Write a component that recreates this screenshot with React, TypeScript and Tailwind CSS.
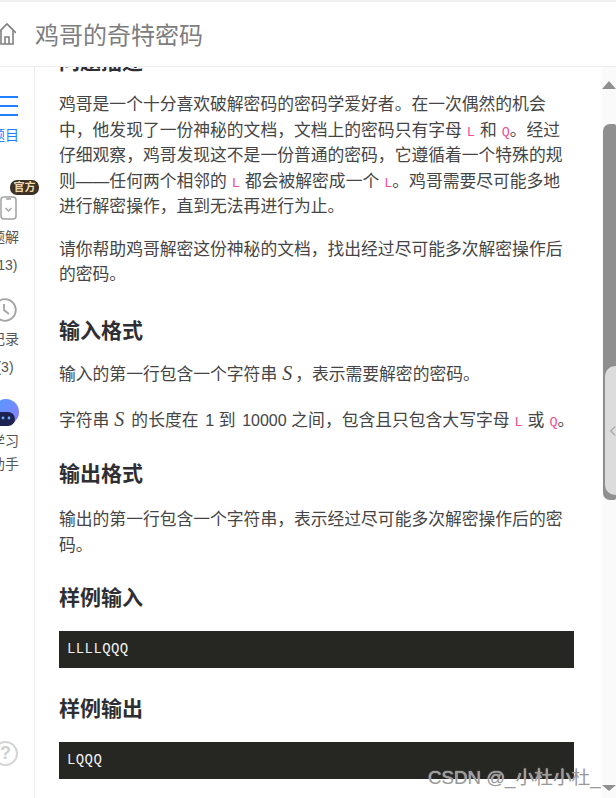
import React from "react";

const CJK = "font-['Liberation_Sans','Noto_Sans_CJK_SC',sans-serif]";

function Code({ children, tail }: { children: React.ReactNode; tail?: boolean }) {
  return (
    <code className={`font-['Liberation_Mono',monospace] text-[13.5px] leading-none text-[#ec4f96] ml-[5px] ${tail ? "mr-0" : "mr-[5px]"}`}>
      {children}
    </code>
  );
}

function S({ className }: { className: string }) {
  return <span className={`font-['Liberation_Serif',serif] italic text-[20px] leading-none ml-[5px] ${className}`}>S</span>;
}

function H({ children, className }: { children: React.ReactNode; className: string }) {
  return <h3 className={`text-[21px] leading-[28px] font-bold text-[#2f2f33] shrink-0 ${className}`}>{children}</h3>;
}

function P({ children, className }: { children: React.ReactNode; className?: string }) {
  return <p className={className ?? "mb-[17px]"}>{children}</p>;
}

function Pre({ children }: { children: React.ReactNode }) {
  return (
    <pre className="bg-[#262622] text-[#f2f2f2] h-[37px] shrink-0 px-[8px] flex items-center font-['Liberation_Mono',monospace] text-[14px] tracking-[0.4px]">
      {children}
    </pre>
  );
}

function SideItem({
  icon,
  lines,
  active,
  className,
  lineClass,
}: {
  icon: React.ReactNode;
  lines: string[];
  active?: boolean;
  className?: string;
  lineClass: string;
}) {
  return (
    <div className={`flex flex-col items-center w-[60px] shrink-0 ${className ?? ""}`}>
      {icon}
      {lines.map((l) => (
        <div key={l} className={`text-[14px] whitespace-nowrap ${lineClass} ${active ? "text-[#1e80ff]" : "text-[#555]"}`}>
          {l}
        </div>
      ))}
    </div>
  );
}

export default function App() {
  return (
    <div className={`relative flex flex-col w-[616px] h-[798px] overflow-hidden bg-white ${CJK}`}>
      <div className="h-[2px] bg-[#efefef]" />
      <header className="h-[65px] shrink-0 flex items-center border-b border-[#ececec]">
        <svg width="18" height="24" viewBox="0 0 18 24" fill="none" stroke="#808080" strokeWidth="1.6" className="-ml-[2px]">
          <path d="M0 11 L9 2 L18 11" />
          <path d="M3 9 V22 H15 V9" />
          <path d="M7 22 V15 H11 V22" />
        </svg>
        <div className="ml-[19px] mt-[3px] text-[24px] leading-[32px] text-[#7d7d7d] whitespace-nowrap">鸡哥的奇特密码</div>
      </header>

      <div className="flex flex-1 min-h-0">
        <aside className="w-[35px] shrink-0 border-r border-[#ececec] overflow-hidden">
          <div className="-ml-[25px] w-[60px] flex flex-col h-full">
            <SideItem
              active
              className="mt-[27px]"
              lineClass="leading-[24px]"
              lines={["题目"]}
              icon={
                <svg width="24" height="24" viewBox="0 0 24 24" stroke="#1e80ff" strokeWidth="2.2" fill="none" className="ml-[2px] mb-[5px]">
                  <path d="M0 3 H24 M0 12 H24 M0 21 H24" />
                </svg>
              }
            />
            <SideItem
              className="mt-[49px]"
              lineClass="leading-[28px]"
              lines={["题解", "(13)"]}
              icon={
                <svg width="18" height="24" viewBox="0 0 18 24" fill="none" stroke="#a3a3a3" strokeWidth="1.5" className="ml-[8px] mb-[3px]">
                  <rect x="1" y="1" width="15" height="22" rx="3" />
                  <path d="M6 3 H11 M5.5 12 L8.5 15 L11.5 12" />
                </svg>
              }
            />
            <SideItem
              className="mt-[19px]"
              lineClass="leading-[28px]"
              lines={["记录", "(3)"]}
              icon={
                <svg width="24" height="24" viewBox="0 0 24 24" fill="none" stroke="#a3a3a3" strokeWidth="1.8" className="mb-[3px]">
                  <circle cx="12" cy="12" r="10.8" />
                  <path d="M11 6 V12 L16 16" />
                </svg>
              }
            />
            <SideItem
              className="mt-[18px]"
              lineClass="leading-[23px]"
              lines={["学习", "助手"]}
              icon={
                <svg width="26" height="30" viewBox="0 0 26 30" className="ml-[2px] mb-[1px]">
                  <defs>
                    <linearGradient id="bot" x1="0" y1="0" x2="1" y2="1">
                      <stop offset="0" stopColor="#4f9dff" />
                      <stop offset="1" stopColor="#8f7bff" />
                    </linearGradient>
                  </defs>
                  <circle cx="13" cy="13" r="13" fill="url(#bot)" />
                  <rect x="1" y="13" width="21" height="14" rx="7" fill="#1d2350" />
                  <circle cx="10" cy="19" r="1.4" fill="#6fa8ff" />
                  <circle cx="16" cy="19" r="1.4" fill="#6fa8ff" />
                </svg>
              }
            />
            <div className="mt-auto mb-[32px] flex justify-center">
              <div className="ml-[1px] w-[25px] h-[25px] rounded-full border-2 border-[#d4d4d4] flex items-center justify-center text-[#cfcfcf] text-[18px] font-bold">?</div>
            </div>
          </div>
        </aside>

        <main className="flex-1 min-w-0 flex flex-col overflow-hidden pl-[24px] pr-[28px] text-[16.8px] leading-[25.5px] text-[#454545]">
          <H className="-mt-[19px] mb-[16px]">问题描述</H>
          <P>
            鸡哥是一个十分喜欢破解密码的密码学爱好者。在一次偶然的机会中&#xFF0C;他发现了一份神秘的文档&#xFF0C;文档上的密码只有字母
            <Code>L</Code>和<Code tail>Q</Code>。经过仔细观察&#xFF0C;鸡哥发现这不是一份普通的密码&#xFF0C;它遵循着一个特殊的规则——任何两个相邻的
            <Code>L</Code>都会被解密成一个<Code tail>L</Code>。鸡哥需要尽可能多地进行解密操作&#xFF0C;直到无法再进行为止。
          </P>
          <P className="mb-[18px]">请你帮助鸡哥解密这份神秘的文档&#xFF0C;找出经过尽可能多次解密操作后的密码。</P>
          <H className="mt-[11px] mb-[17px]">输入格式</H>
          <P className="mb-[20.5px]">
            输入的第一行包含一个字符串<S className="mr-[3px]" />&#xFF0C;表示需要解密的密码。
          </P>
          <P className="mb-[17px] -mr-[8px]">
            字符串<S className="mr-[7px]" />的长度在 <span className="text-[16px] ml-[2px]">1</span> 到 <span className="text-[16px] ml-[2px]">10000</span> 之间&#xFF0C;包含且只包含大写字母<Code>L</Code>或<Code tail>Q</Code>。
          </P>
          <H className="mt-[10px] mb-[19px]">输出格式</H>
          <P>输出的第一行包含一个字符串&#xFF0C;表示经过尽可能多次解密操作后的密码。</P>
          <H className="mt-[9px] mb-[19px]">样例输入</H>
          <Pre>LLLLQQQ</Pre>
          <H className="mt-[27px] mb-[19px]">样例输出</H>
          <Pre>LQQQ</Pre>
        </main>

        <div className="w-[14px] shrink-0 bg-[#fafafa] flex flex-col items-end">
          <div className="mt-[14px] w-0 h-0 border-x-[7px] border-x-transparent border-b-[8px] border-b-[#8f8f8f]" />
          <div className="mt-[35px] w-[13px] h-[376px] bg-[#8f8f8f] rounded-l-[7px] rounded-r-[2px]" />
          <div className="mt-auto mb-[7px] w-0 h-0 border-x-[7px] border-x-transparent border-t-[6px] border-t-[#8f8f8f]" />
        </div>
      </div>

      <div className="absolute left-[10px] top-[180px] w-[29px] h-[15px] rounded-[7px] bg-[#3d3226] text-[#efd9ae] text-[11px] leading-[15px] text-center font-bold">官方</div>

      <div className="absolute right-0 top-[366px] w-[11px] h-[129px] bg-[#dcdcdc] rounded-l-[10px] flex items-center">
        <svg width="8" height="14" viewBox="0 0 8 14" fill="none" stroke="#a9a9a9" strokeWidth="1.6" className="ml-[4px]">
          <path d="M7 2 L2 7 L7 12" />
        </svg>
      </div>

      <div className="absolute left-[428px] top-[766px] text-[18.7px] leading-[24px] text-[#999] whitespace-nowrap [text-shadow:0_0_1px_#ffffff]">CSDN @_小杜小杜_</div>
    </div>
  );
}
